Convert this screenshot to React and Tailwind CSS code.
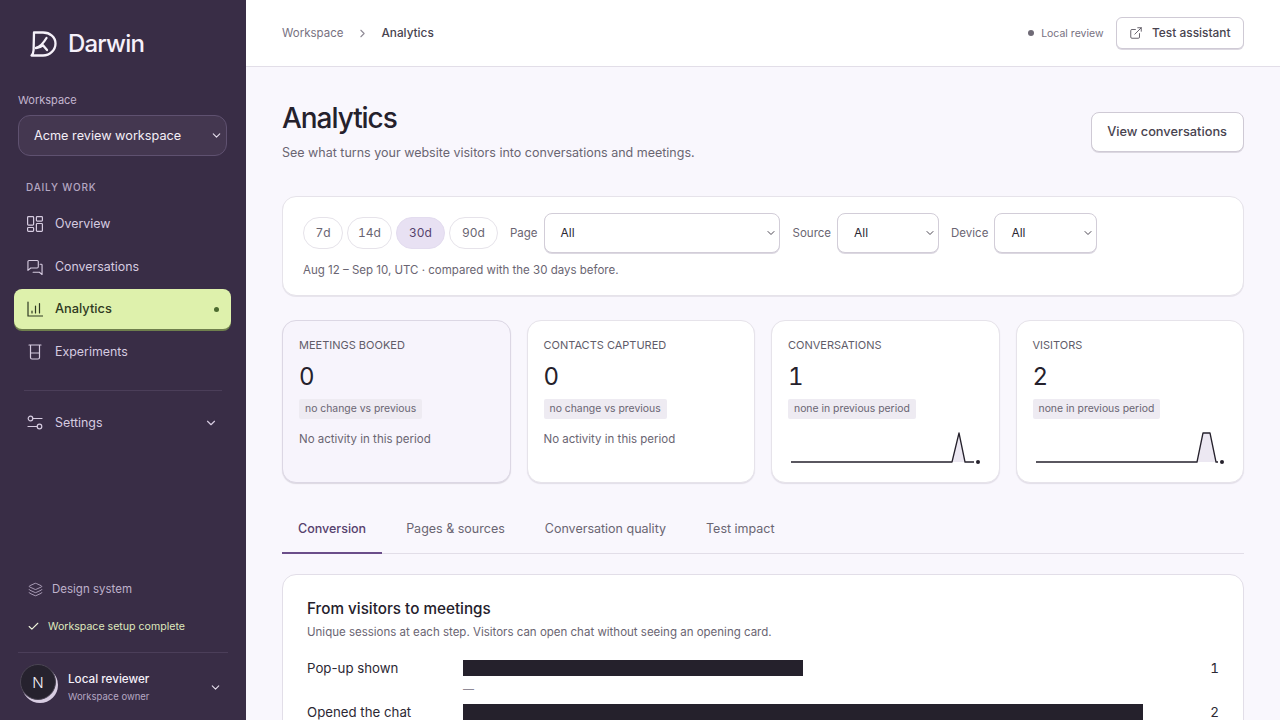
import React from "react";
import { ChevronDown, ChevronRight, ExternalLink, Check, Layers } from "lucide-react";

const Logo = () => (
  <svg width="28" height="28" viewBox="0 0 28 28" fill="none" stroke="#f6f1fa" strokeWidth="2.3" strokeLinecap="round" strokeLinejoin="round">
    <path d="M4 2.500H13C20 2.500 25.500 7 25.500 13.500C25.500 20 20 25.500 13 25.500H1.500C3 24 3.500 22 3.600 20Z" />
    <path d="M6 18C9.500 17 13.500 13 16.500 8" />
    <path d="M6 18C9 17.800 11.500 16.500 13 15.300L17 20" />
  </svg>
);

const OverviewIcon = () => (
  <svg width="16" height="16" viewBox="0 0 16 16" fill="none" stroke="currentColor" strokeWidth="1.2">
    <rect x="0.6" y="0.6" width="6" height="8.5" rx="0.8" />
    <rect x="9.400" y="0.6" width="6" height="4.500" rx="0.8" />
    <rect x="0.6" y="11.500" width="6" height="3.900" rx="0.8" />
    <rect x="9.400" y="7.500" width="6" height="7.900" rx="0.8" />
  </svg>
);
const ChatIcon = () => (
  <svg width="17" height="17" viewBox="0 0 17 17" fill="none" stroke="currentColor" strokeWidth="1.2" strokeLinejoin="round" strokeLinecap="round">
    <path d="M1 2.200c0-.7.500-1.200 1.200-1.200h8.600c.7 0 1.200.5 1.200 1.200v5.600c0 .7-.5 1.200-1.200 1.200H4L1 11.500z" />
    <path d="M14 5h1.200c.5 0 .8.300.8.800V16l-2.800-2.500H6.500" />
  </svg>
);
const ChartIcon = () => (
  <svg width="16" height="16" viewBox="0 0 16 16" fill="none" stroke="currentColor" strokeWidth="1.2" strokeLinecap="round">
    <path d="M1 1v14h14.500" />
    <path d="M5 10v2M8.500 5v7M12.500 2.500V12" />
  </svg>
);
const BeakerIcon = () => (
  <svg width="16" height="16" viewBox="0 0 16 16" fill="none" stroke="currentColor" strokeWidth="1.2" strokeLinecap="round" strokeLinejoin="round">
    <path d="M2 1h12M3.500 1v12.500c0 .8.700 1.500 1.500 1.500h6c.8 0 1.500-.7 1.500-1.500V1M3.500 9h9" />
  </svg>
);
const SlidersIcon = () => (
  <svg width="16" height="16" viewBox="0 0 16 16" fill="none" stroke="currentColor" strokeWidth="1.2" strokeLinecap="round">
    <circle cx="3.500" cy="3.500" r="2.300" />
    <circle cx="12.500" cy="11.500" r="2.300" />
    <path d="M6 3.500h9M1 11.500h9" />
  </svg>
);

const NavItem = ({ icon, label, active, gap }) => (
  <div
    className={
      active
        ? `${gap} flex items-center h-[40px] w-[217px] ml-[14px] pl-[13px] pr-[12px] gap-[12px] rounded-[8px] bg-[#def1ac] text-[#2f3a22] font-medium shadow-[0_2px_0_#6f7f4d]`
        : `${gap} flex items-center h-[40px] w-[217px] ml-[14px] pl-[13px] pr-[12px] gap-[12px] text-[#d6cbe0]`
    }
  >
    <span className="w-[16px] flex justify-center shrink-0">{icon}</span>
    <span className={active ? "text-[12.800px] pb-[1px] flex-1" : "text-[12.400px] flex-1"}>{label}</span>
    {active && <span className="w-[5px] h-[5px] rounded-full bg-[#4c6b30]" />}
  </div>
);

const Sidebar = () => (
  <aside className="w-[246px] shrink-0 h-full bg-[#392d46] flex flex-col">
    <div className="flex items-center h-[86px] pl-[30px] gap-[10px] pt-[1px]">
      <Logo />
      <span className="text-[24px] font-medium text-[#f6f1fa] tracking-[-0.8px]">Darwin</span>
    </div>
    <div className="px-[18px] mt-[7px]">
      <div className="text-[11px] leading-[14px] text-[#c4b6d0]">Workspace</div>
      <div className="mt-[8px] w-[209px] h-[41px] rounded-[12px] border border-[#5f5170] bg-[#443750] flex items-center justify-between pl-[15px] pr-[3px]">
        <span className="text-[12.700px] text-[#f3eef7]">Acme review workspace</span>
        <ChevronDown size={13} className="text-[#e6deec]" />
      </div>
    </div>
    <div className="pl-[26px] mt-[25px] text-[10px] leading-[13px] font-medium tracking-[0.8px] text-[#b5a7c2]">DAILY WORK</div>
    <div className="flex flex-col mt-[10px]">
      <NavItem icon={<OverviewIcon />} label="Overview" gap="mt-0" />
      <NavItem icon={<ChatIcon />} label="Conversations" gap="mt-[3px]" />
      <NavItem icon={<ChartIcon />} label="Analytics" active gap="mt-[2px]" />
      <NavItem icon={<BeakerIcon />} label="Experiments" gap="mt-[3px]" />
    </div>
    <div className="mx-[24px] mt-[17.500px] h-px bg-[#4b3e59]" />
    <div className="flex items-center h-[41px] mt-[12px] pl-[27px] pr-[28px] gap-[12px] text-[#d6cbe0]">
      <SlidersIcon />
      <span className="text-[12.400px] flex-1">Settings</span>
      <ChevronDown size={14} />
    </div>
    <div className="flex-1" />
    <div className="flex items-center pl-[28px] gap-[9px] text-[#bfb1cb] h-[20px]">
      <Layers size={15} strokeWidth={1.3} />
      <span className="text-[11.500px] pt-[2px]">Design system</span>
    </div>
    <div className="flex items-center pl-[27px] gap-[8px] mt-[17px] h-[20px]">
      <Check size={13} className="text-[#f0f6dc]" />
      <span className="text-[10.600px] pt-[2px] text-[#dfe8bd]">Workspace setup complete</span>
    </div>
    <div className="mx-[18px] mt-[16px] h-px bg-[#4b3e59]" />
    <div className="flex items-center h-[67px] pl-[20px] pr-[24px]">
      <div className="w-[36px] h-[36px] rounded-full bg-[#26222e] border border-[#4b4554] shadow-[2px_3px_0_#d8cde2] flex items-center justify-center pt-[4px] text-[#f4f0f8] text-[15px] font-light mt-[-10px]">N</div>
      <div className="ml-[12px] flex-1 mt-[2px]">
        <div className="text-[11.700px] leading-[16px] font-medium text-[#f6f1fa]">Local reviewer</div>
        <div className="text-[9.500px] leading-[14px] mt-[3px] text-[#b5a7c2]">Workspace owner</div>
      </div>
      <ChevronDown size={13} className="text-[#e6deec] mt-[2px]" />
    </div>
  </aside>
);

const Header = () => (
  <header className="h-[67px] shrink-0 bg-white border-b border-[#e2dee8] flex items-center pl-[36px] pr-[36px]">
    <span className="text-[11.500px] pt-[2px] text-[#77717f]">Workspace</span>
    <ChevronRight size={13} className="ml-[13px] mr-[12px] text-[#8f8a96]" />
    <span className="text-[11.800px] pt-[2px] font-medium text-[#48434f]">Analytics</span>
    <div className="flex-1" />
    <span className="w-[6px] h-[6px] rounded-full bg-[#6f6a76] mr-[7px]" />
    <span className="text-[10.500px] pt-[1px] text-[#77717f]">Local review</span>
    <div className="ml-[12px] h-[32px] px-[12.500px] rounded-[6px] border border-[#cfcad5] bg-white flex items-center gap-[9px] shadow-[0_1px_0_#dcd8e1]">
      <ExternalLink size={14} className="text-[#48434f]" strokeWidth={1.4} />
      <span className="text-[11.900px] font-medium text-[#48434f]">Test assistant</span>
    </div>
  </header>
);

const Pill = ({ label, active, w }) => (
  <div className={active ? `${w} h-[32px] rounded-full border border-[#e3dcef] bg-[#e8e1f3] text-[#56416d] text-[12px] tabular-nums flex items-center justify-center` : `${w} h-[32px] rounded-full border border-[#e6e3ea] bg-white text-[#6a6572] text-[12px] tabular-nums flex items-center justify-center`}>{label}</div>
);

const Sel = ({ w }) => (
  <div className={`${w} h-[40px] rounded-[8px] border border-[#d2cdd8] bg-white flex items-center justify-between pl-[16px] pr-[2px] shadow-[0_1px_0_#dcd8e1]`}>
    <span className="text-[12px] text-[#2c2833]">All</span>
    <ChevronDown size={12} className="text-[#4c4753]" />
  </div>
);

const Spark = ({ d, fill, dot }) => (
  <svg width="196" height="36" viewBox="0 0 196 36" fill="none" className="mt-[10px]">
    <path d={fill} fill="#ece8f2" />
    <path d={d} stroke="#25212c" strokeWidth="1.300" strokeLinejoin="round" />
    <circle cx={dot} cy="33" r="2" fill="#25212c" />
  </svg>
);

const Metric = ({ label, value, chip, empty, tint, children }) => (
  <div className={tint ? "h-[163px] rounded-[14px] border border-[#dcd7e4] bg-[#f7f4fc] shadow-[0_1px_1px_#dcd8e1] pt-[16px] px-[16px]" : "h-[163px] rounded-[14px] border border-[#e6e3ea] bg-white shadow-[0_1px_1px_#e2dee8] pt-[16px] px-[16px]"}>
    <div className="text-[11px] leading-[16px] text-[#615c69]">{label}</div>
    <div className="text-[24px] leading-[30px] mt-[9px] text-[#25212c] tabular-nums">{value}</div>
    <div className="leading-[0] h-[20px] mt-[7px]"><span className="inline-block text-[10.400px] leading-[20px] px-[6px] rounded-[2px] bg-[#eeebf2] text-[#6a6572]">{chip}</span></div>
    {empty && <div className="text-[11.500px] leading-[16px] mt-[12px] text-[#6a6572]">No activity in this period</div>}
    {children}
  </div>
);

const Funnel = ({ label, width, value }) => (
  <div className="flex items-center h-[16px]">
    <div className="w-[156px] text-[13.250px] pt-[1px] text-[#2c2833]">{label}</div>
    <div className="w-[680px] h-[16px]">
      <div className="h-full bg-[#25212c]" style={{ width }} />
    </div>
    <div className="flex-1 text-right text-[13.500px] leading-[16px] text-[#2c2833] tabular-nums">{value}</div>
  </div>
);

const Tab = ({ label, active }) => (
  <div className={active ? "px-[16px] h-[50px] flex items-center pt-[1px] border-y-2 border-t-transparent border-b-[#6b4e8a] text-[#56416d] font-medium" : "px-[16px] h-[50px] flex items-center pt-[1px] border-y-2 border-transparent"}>{label}</div>
);

const Main = () => (
  <main className="flex-1 min-w-0 h-full flex flex-col bg-[#f9f7fd]">
    <Header />
    <div className="flex-1 min-h-0 overflow-hidden px-[36px]">
      <div className="flex justify-between items-start pt-[45px]">
        <div>
          <h1 className="text-[28px] leading-[36px] font-medium text-[#25212c] tracking-[-1.05px] mt-[-12px]">Analytics</h1>
          <p className="text-[12.500px] leading-[18px] mt-[8px] text-[#6a6572]">See what turns your website visitors into conversations and meetings.</p>
        </div>
        <div className="h-[40px] pl-[15px] pr-[16px] rounded-[8px] border border-[#cfcad5] bg-white flex items-center text-[12.800px] font-medium text-[#48434f] shadow-[0_1px_0_#dcd8e1]">View conversations</div>
      </div>
      <div className="mt-[34px] h-[100px] rounded-[14px] border border-[#e6e3ea] bg-white pl-[20px] pt-[16px] shadow-[0_1px_0_#e8e5ed]">
        <div className="flex items-center">
          <div className="flex gap-[4px]">
            <Pill label="7d" w="w-[40px]" /><Pill label="14d" w="w-[45px]" /><Pill label="30d" w="w-[49px]" active /><Pill label="90d" w="w-[49px]" />
          </div>
          <span className="ml-[12px] mr-[6px] pt-[1px] text-[11.500px] text-[#6a6572]">Page</span>
          <Sel w="w-[236px]" />
          <span className="ml-[13px] mr-[6px] pt-[1px] text-[11.500px] text-[#6a6572]">Source</span>
          <Sel w="w-[102px]" />
          <span className="ml-[12px] mr-[6px] pt-[1px] text-[11.500px] text-[#6a6572]">Device</span>
          <Sel w="w-[103px]" />
        </div>
        <div className="mt-[9px] text-[11.500px] leading-[16px] text-[#6a6572]">Aug 12 – Sep 10, UTC · compared with the 30 days before.</div>
      </div>
      <div className="grid grid-cols-4 gap-[16px] mt-[24px]">
        <Metric label="MEETINGS BOOKED" value="0" chip="no change vs previous" empty tint />
        <Metric label="CONTACTS CAPTURED" value="0" chip="no change vs previous" empty />
        <Metric label="CONVERSATIONS" value="1" chip="none in previous period">
          <Spark d="M3 33H164L171 4L177 33H186" fill="M164 33L171 4L177 33Z" dot={190} />
        </Metric>
        <Metric label="VISITORS" value="2" chip="none in previous period">
          <Spark d="M3 33H164L170 4H177L183 33H185" fill="M164 33L170 4H177L183 33Z" dot={189} />
        </Metric>
      </div>
      <div className="flex mt-[21px] h-[50px] gap-[8px] border-b border-[#e2dee8] text-[12.500px] text-[#6a6572]">
        <Tab label="Conversion" active />
        <Tab label="Pages & sources" />
        <Tab label="Conversation quality" />
        <Tab label="Test impact" />
      </div>
      <div className="mt-[20px] rounded-[14px] border border-[#e2dee8] bg-white pl-[24px] pr-[24px] pt-[24px] pb-[24px]">
        <div className="text-[15.250px] leading-[20px] font-medium text-[#25212c]">From visitors to meetings</div>
        <div className="text-[11.500px] leading-[16px] mt-[5px] text-[#6a6572]">Unique sessions at each step. Visitors can open chat without seeing an opening card.</div>
        <div className="mt-[20px]">
          <Funnel label="Pop-up shown" width="340px" value="1" />
          <div className="h-[28px] pl-[156px] text-[11px] text-[#8f8a96] leading-[26px]">—</div>
          <Funnel label="Opened the chat" width="680px" value="2" />
        </div>
      </div>
    </div>
  </main>
);

export default function App() {
  return (
    <div className="w-[1280px] h-[720px] flex overflow-hidden font-['Inter','Liberation_Sans',sans-serif]">
      <Sidebar />
      <Main />
    </div>
  );
}
